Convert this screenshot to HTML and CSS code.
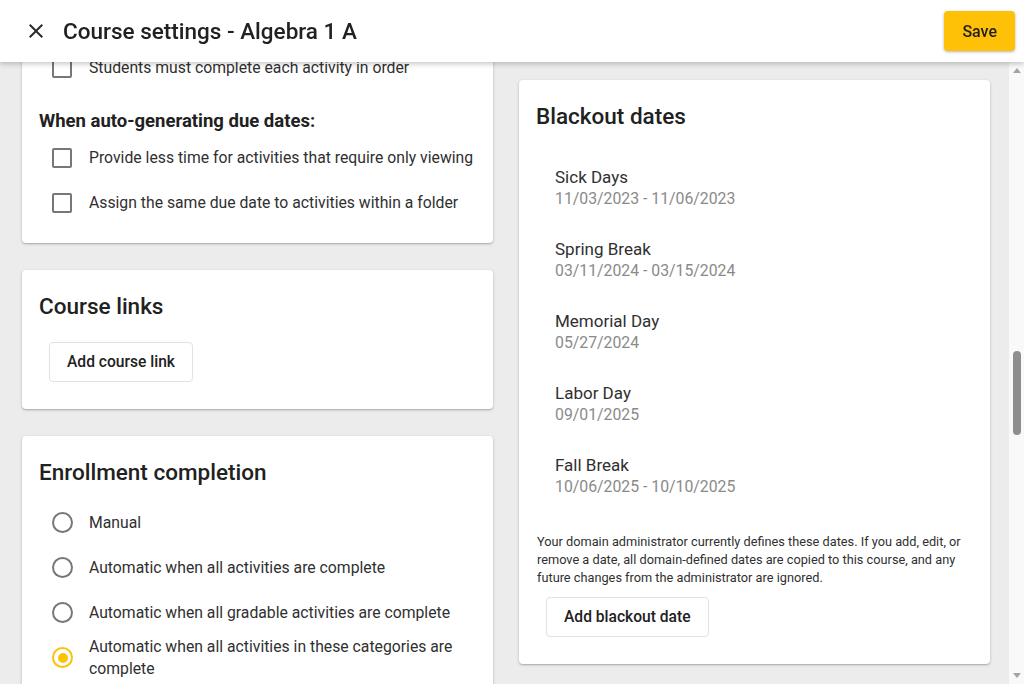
FILE: index.html
```html
<!DOCTYPE html>
<html lang="en">
<head>
<meta charset="utf-8">
<title>Course settings - Algebra 1 A</title>
<link rel="stylesheet" href="styles.css">
</head>
<body>
<div class="app">
  <header class="topbar">
    <button class="icon-btn" type="button" aria-label="Close">
      <svg viewBox="0 0 24 24" width="24" height="24" aria-hidden="true"><path fill="currentColor" d="M19 6.41L17.59 5 12 10.59 6.41 5 5 6.41 10.59 12 5 17.59 6.41 19 12 13.41 17.59 19 19 17.59 13.41 12z"/></svg>
    </button>
    <h1 class="topbar-title">Course settings - Algebra 1 A</h1>
    <button class="btn-primary" type="button">Save</button>
  </header>

  <div class="workspace">
    <main class="main">
      <div class="columns">
        <!-- left column -->
        <div class="column">
          <section class="card">
            <h2 class="card-title">Details</h2>
            <div class="card-body">
              <div class="field"><span class="field-label">Title</span><div class="field-input">Algebra 1 A</div></div>
              <div class="field"><span class="field-label">Course ID</span><div class="field-input">ALG1A-2024</div></div>
              <div class="field"><span class="field-label">Subject</span><div class="field-input">Mathematics</div></div>
              <div class="field"><span class="field-label">Grade levels</span><div class="field-input">9, 10</div></div>
              <div class="field"><span class="field-label">Term</span><div class="field-input">2024 - 2025</div></div>
              <div class="field"><span class="field-label">Language</span><div class="field-input">English</div></div>
              <div class="field"><span class="field-label">Description</span><div class="field-input textarea">Linear equations, inequalities, functions and an introduction to quadratics.</div></div>
            </div>
          </section>

          <section class="card">
            <h2 class="card-title">Student experience</h2>
            <div class="card-body">
              <label class="check-row"><span class="checkbox"></span><span class="row-text">Show course overview on the home page</span></label>
              <label class="check-row"><span class="checkbox"></span><span class="row-text">Show activity scores to students</span></label>
              <label class="check-row"><span class="checkbox"></span><span class="row-text">Show the gradebook to students</span></label>
              <label class="check-row"><span class="checkbox"></span><span class="row-text">Show class averages</span></label>
              <label class="check-row"><span class="checkbox"></span><span class="row-text">Allow students to view future activities</span></label>
              <label class="check-row"><span class="checkbox"></span><span class="row-text">Allow students to see the course roster</span></label>
              <label class="check-row"><span class="checkbox"></span><span class="row-text">Show the course calendar</span></label>
              <label class="check-row"><span class="checkbox"></span><span class="row-text">Show course announcements</span></label>
              <div class="subhead">Discussions:</div>
              <label class="check-row"><span class="checkbox"></span><span class="row-text">Allow students to start new threads</span></label>
              <label class="check-row"><span class="checkbox"></span><span class="row-text">Allow anonymous posts</span></label>
              <label class="check-row"><span class="checkbox"></span><span class="row-text">Require a post before viewing replies</span></label>
            </div>
          </section>

          <section class="card">
            <h2 class="card-title">Standards</h2>
            <div class="card-body">
              <div class="field"><span class="field-label">Standards set</span><div class="field-input">Common Core State Standards</div></div>
              <label class="check-row"><span class="checkbox"></span><span class="row-text">Show standards on activities</span></label>
              <label class="check-row"><span class="checkbox"></span><span class="row-text">Report mastery by standard</span></label>
              <label class="check-row"><span class="checkbox"></span><span class="row-text">Include ungraded standards</span></label>
              <label class="check-row"><span class="checkbox"></span><span class="row-text">Allow teachers to edit alignments</span></label>
            </div>
          </section>

          <section class="card">
            <h2 class="card-title">Course progression</h2>
            <div class="card-body">
              <label class="check-row"><span class="checkbox"></span><span class="row-text">Hide activities until their start date</span></label>
              <label class="check-row"><span class="checkbox"></span><span class="row-text">Lock activities after their due date</span></label>
              <label class="check-row"><span class="checkbox"></span><span class="row-text">Allow late submissions</span></label>
              <label class="check-row"><span class="checkbox"></span><span class="row-text">Students must complete each activity in order</span></label>
              <div class="subhead">When auto-generating due dates:</div>
              <label class="check-row"><span class="checkbox"></span><span class="row-text">Provide less time for activities that require only viewing</span></label>
              <label class="check-row"><span class="checkbox"></span><span class="row-text">Assign the same due date to activities within a folder</span></label>
            </div>
          </section>

          <section class="card">
            <h2 class="card-title">Course links</h2>
            <div class="card-body">
              <div class="actions"><button class="btn" type="button">Add course link</button></div>
            </div>
          </section>

          <section class="card">
            <h2 class="card-title">Enrollment completion</h2>
            <div class="card-body options">
              <label class="radio-row"><span class="radio"></span><span class="row-text">Manual</span></label>
              <label class="radio-row"><span class="radio"></span><span class="row-text">Automatic when all activities are complete</span></label>
              <label class="radio-row"><span class="radio"></span><span class="row-text">Automatic when all gradable activities are complete</span></label>
              <label class="radio-row"><span class="radio on"></span><span class="row-text">Automatic when all activities in these categories are complete</span></label>
              <label class="check-row nested"><span class="checkbox"></span><span class="row-text">Homework</span></label>
              <label class="check-row nested"><span class="checkbox"></span><span class="row-text">Quizzes</span></label>
              <label class="check-row nested"><span class="checkbox"></span><span class="row-text">Tests</span></label>
              <label class="check-row nested"><span class="checkbox"></span><span class="row-text">Projects</span></label>
              <label class="check-row nested"><span class="checkbox"></span><span class="row-text">Participation</span></label>
            </div>
          </section>

          <section class="card">
            <h2 class="card-title">Certificates</h2>
            <div class="card-body">
              <label class="check-row"><span class="checkbox"></span><span class="row-text">Issue a certificate on completion</span></label>
              <label class="check-row"><span class="checkbox"></span><span class="row-text">Include the final grade</span></label>
              <label class="check-row"><span class="checkbox"></span><span class="row-text">Email the certificate to the student</span></label>
              <div class="field"><span class="field-label">Certificate title</span><div class="field-input">Certificate of Completion</div></div>
              <div class="field"><span class="field-label">Signed by</span><div class="field-input">Course instructor</div></div>
            </div>
          </section>

          <section class="card">
            <h2 class="card-title">Announcements</h2>
            <div class="card-body">
              <label class="check-row"><span class="checkbox"></span><span class="row-text">Show announcements on the home page</span></label>
              <label class="check-row"><span class="checkbox"></span><span class="row-text">Email announcements to students</span></label>
              <label class="check-row"><span class="checkbox"></span><span class="row-text">Email announcements to guardians</span></label>
              <label class="check-row"><span class="checkbox"></span><span class="row-text">Allow comments on announcements</span></label>
              <label class="check-row"><span class="checkbox"></span><span class="row-text">Pin the newest announcement</span></label>
              <label class="check-row"><span class="checkbox"></span><span class="row-text">Archive announcements after 30 days</span></label>
            </div>
          </section>

          <section class="card">
            <h2 class="card-title">Integrations</h2>
            <div class="card-body">
              <div class="field"><span class="field-label">Student information system ID</span><div class="field-input">SIS-88214</div></div>
              <div class="field"><span class="field-label">External tool</span><div class="field-input">None</div></div>
              <label class="check-row"><span class="checkbox"></span><span class="row-text">Sync grades to the SIS</span></label>
              <label class="check-row"><span class="checkbox"></span><span class="row-text">Sync enrollments from the SIS</span></label>
              <label class="check-row"><span class="checkbox"></span><span class="row-text">Allow LTI launches</span></label>
              <label class="check-row"><span class="checkbox"></span><span class="row-text">Share usage data</span></label>
            </div>
          </section>

          <section class="card">
            <h2 class="card-title">Archive</h2>
            <div class="card-body">
              <label class="check-row"><span class="checkbox"></span><span class="row-text">Archive course after the end date</span></label>
              <label class="check-row"><span class="checkbox"></span><span class="row-text">Keep student submissions</span></label>
              <label class="check-row"><span class="checkbox"></span><span class="row-text">Notify teachers before archiving</span></label>
            </div>
          </section>
        </div>

        <!-- right column -->
        <div class="column">
          <section class="card">
            <h2 class="card-title">Grading</h2>
            <div class="card-body">
              <div class="field"><span class="field-label">Grade scale</span><div class="field-input">Standard (A - F)</div></div>
              <div class="field"><span class="field-label">Passing score</span><div class="field-input">70%</div></div>
              <div class="subhead">Gradebook:</div>
              <label class="check-row"><span class="checkbox"></span><span class="row-text">Show letter grades</span></label>
              <label class="check-row"><span class="checkbox"></span><span class="row-text">Drop the lowest score in each category</span></label>
              <label class="check-row"><span class="checkbox"></span><span class="row-text">Count missing work as zero</span></label>
              <label class="check-row"><span class="checkbox"></span><span class="row-text">Round final grades</span></label>
            </div>
          </section>

          <section class="card">
            <h2 class="card-title">Notifications</h2>
            <div class="card-body">
              <label class="check-row"><span class="checkbox"></span><span class="row-text">New submissions</span></label>
              <label class="check-row"><span class="checkbox"></span><span class="row-text">Late submissions</span></label>
              <label class="check-row"><span class="checkbox"></span><span class="row-text">New discussion posts</span></label>
              <label class="check-row"><span class="checkbox"></span><span class="row-text">Enrollment changes</span></label>
              <label class="check-row"><span class="checkbox"></span><span class="row-text">Messages from students</span></label>
              <div class="subhead">Students are notified of:</div>
              <label class="check-row"><span class="checkbox"></span><span class="row-text">New grades</span></label>
              <label class="check-row"><span class="checkbox"></span><span class="row-text">Upcoming due dates</span></label>
              <label class="check-row"><span class="checkbox"></span><span class="row-text">Teacher feedback</span></label>
            </div>
          </section>

          <section class="card">
            <h2 class="card-title">Schedule</h2>
            <div class="card-body">
              <div class="field"><span class="field-label">Start date</span><div class="field-input">08/19/2024</div></div>
              <div class="field"><span class="field-label">End date</span><div class="field-input">05/30/2025</div></div>
              <div class="field"><span class="field-label">Time zone</span><div class="field-input">Mountain Time</div></div>
              <label class="check-row"><span class="checkbox"></span><span class="row-text">Hide course before the start date</span></label>
              <label class="check-row"><span class="checkbox"></span><span class="row-text">Lock course after the end date</span></label>
              <label class="check-row"><span class="checkbox"></span><span class="row-text">Skip weekends when scheduling</span></label>
            </div>
          </section>

          <section class="card">
            <h2 class="card-title">Availability</h2>
            <div class="card-body">
              <div class="field"><span class="field-label">Days in session</span><div class="field-input">Monday - Friday</div></div>
              <div class="field"><span class="field-label">Enrollment limit</span><div class="field-input">35</div></div>
              <label class="check-row"><span class="checkbox"></span><span class="row-text">Open enrollment</span></label>
              <label class="check-row"><span class="checkbox"></span><span class="row-text">Require enrollment approval</span></label>
              <label class="check-row"><span class="checkbox"></span><span class="row-text">Allow self-paced enrollment</span></label>
              <label class="check-row"><span class="checkbox"></span><span class="row-text">Show in the course catalog</span></label>
              <label class="check-row"><span class="checkbox"></span><span class="row-text">Allow guest access</span></label>
              <label class="check-row"><span class="checkbox"></span><span class="row-text">Allow course copies</span></label>
            </div>
          </section>

          <section class="card" id="blackout-dates">
            <h2 class="card-title">Blackout dates</h2>
            <div class="card-body">
              <ul class="date-list">
                <li class="date-item"><span class="date-name">Sick Days</span><span class="date-range">11/03/2023 - 11/06/2023</span></li>
                <li class="date-item"><span class="date-name">Spring Break</span><span class="date-range">03/11/2024 - 03/15/2024</span></li>
                <li class="date-item"><span class="date-name">Memorial Day</span><span class="date-range">05/27/2024</span></li>
                <li class="date-item"><span class="date-name">Labor Day</span><span class="date-range">09/01/2025</span></li>
                <li class="date-item"><span class="date-name">Fall Break</span><span class="date-range">10/06/2025 - 10/10/2025</span></li>
              </ul>
              <p class="note">Your domain administrator currently defines these dates. If you add, edit, or remove a date, all domain-defined dates are copied to this course, and any future changes from the administrator are ignored.</p>
              <div class="actions"><button class="btn" type="button">Add blackout date</button></div>
            </div>
          </section>
        </div>
      </div>
    </main>

    <div class="scrollbar" aria-hidden="true">
      <span class="scroll-arrow up"></span>
      <div class="scroll-track"><span class="scroll-thumb"></span></div>
      <span class="scroll-arrow down"></span>
    </div>
  </div>
</div>
<script src="script.js"></script>
</body>
</html>
```

FILE: styles.css
```css
* {
  box-sizing: border-box;
}

html,
body {
  margin: 0;
  height: 100%;
}

body {
  font-family: Roboto, "Noto Sans", "Liberation Sans", sans-serif;
  font-size: 15.75px;
  line-height: 22px;
  color: #303030;
  background: #ececec;
}

button {
  font-family: inherit;
}

.app {
  display: flex;
  flex-direction: column;
  height: 100vh;
}

/* top bar */
.topbar {
  flex: none;
  position: relative;
  z-index: 2;
  display: flex;
  align-items: center;
  height: 62px;
  padding: 0 9px 0 24px;
  background: #fff;
  box-shadow: 0 2px 5px rgba(0, 0, 0, 0.22);
}

.icon-btn {
  display: flex;
  width: 24px;
  height: 24px;
  padding: 0;
  border: 0;
  background: none;
  color: #2b2b2b;
  cursor: pointer;
}

.topbar-title {
  flex: 1;
  margin: 0 0 0 15px;
  font-size: 22.5px;
  line-height: 30px;
  font-weight: 500;
  color: #212121;
}

.btn-primary {
  height: 40px;
  padding: 0 18px;
  border: 0;
  border-radius: 4px;
  background: #ffc107;
  color: #1f1f1f;
  font-size: 16px;
  font-weight: 500;
  box-shadow: 0 1px 3px rgba(0, 0, 0, 0.3);
}

/* scrolling content with its own scrollbar rail */
.workspace {
  flex: 1;
  min-height: 0;
  display: flex;
}

.main {
  flex: 1;
  min-width: 0;
  overflow-y: scroll;
  scrollbar-width: none;
  background: #ececec;
}

.main::-webkit-scrollbar {
  display: none;
}

.scrollbar {
  flex: none;
  width: 15px;
  display: flex;
  flex-direction: column;
  background: #f9f9f9;
}

.scroll-arrow {
  flex: none;
  height: 15px;
  display: flex;
  justify-content: center;
  align-items: center;
}

.scroll-arrow::before {
  content: "";
  width: 0;
  height: 0;
  border-left: 4px solid transparent;
  border-right: 4px solid transparent;
}

.scroll-arrow.up {
  padding-top: 2px;
}

.scroll-arrow.up::before {
  border-bottom: 5px solid #a3a3a3;
}

.scroll-arrow.down {
  padding-bottom: 2px;
}

.scroll-arrow.down::before {
  border-top: 5px solid #a3a3a3;
}

.scroll-track {
  flex: 1;
  padding: 0 3px 0 4px;
}

.scroll-thumb {
  display: block;
  width: 8px;
  height: 84px;
  border-radius: 4px;
  background: #8e8e8e;
}

.columns {
  display: grid;
  grid-template-columns: 1fr 1fr;
  align-items: start;
  column-gap: 26px;
  padding: 18px 19px 20px 22px;
}

.column {
  display: flex;
  flex-direction: column;
  gap: 27px;
}

.card {
  padding: 20px 18px 18px;
  background: #fff;
  border-radius: 4px;
  box-shadow: 0 1px 3px rgba(0, 0, 0, 0.22), 0 1px 1px rgba(0, 0, 0, 0.1);
}

.card-title {
  margin: 0 0 0 -1px;
  font-size: 22.5px;
  line-height: 32px;
  font-weight: 500;
  color: #212121;
}

.card-body {
  margin-top: 11px;
}

.card-body.options {
  padding-top: 1px;
}

.subhead {
  margin: 20px 0 3px -1px;
  font-size: 18.5px;
  font-weight: 700;
  color: #212121;
}

/* checkbox and radio rows */
.check-row,
.radio-row {
  display: flex;
  align-items: center;
  gap: 17px;
  min-height: 45px;
  padding-left: 12px;
  color: #303030;
}

.radio-row {
  gap: 16px;
}

.check-row .row-text {
  white-space: nowrap;
}

.check-row.nested {
  padding-left: 49px;
}

.checkbox {
  flex: none;
  width: 20px;
  height: 20px;
  border: 2px solid #777;
  border-radius: 2px;
  background: #fff;
}

.radio {
  flex: none;
  display: grid;
  place-items: center;
  width: 21px;
  height: 21px;
  border: 2px solid #777;
  border-radius: 50%;
  background: #fff;
}

.radio.on {
  border-color: #ffc107;
}

.radio.on::after {
  content: "";
  width: 10px;
  height: 10px;
  border-radius: 50%;
  background: #ffc107;
}

/* text fields */
.field {
  padding: 8px 0;
}

.field-label {
  display: block;
  font-size: 14px;
  line-height: 20px;
  color: #555;
}

.field-input {
  height: 40px;
  margin-top: 4px;
  padding: 0 12px;
  border: 1px solid #c4c4c4;
  border-radius: 4px;
  line-height: 38px;
  color: #303030;
}

.field-input.textarea {
  height: 150px;
  padding-top: 8px;
  line-height: 22px;
}

/* buttons */
.actions {
  display: flex;
}

.btn {
  height: 40px;
  margin: 9px;
  padding: 0 17px;
  border: 1px solid #e2e2e2;
  border-radius: 4px;
  background: #fff;
  color: #212121;
  font-size: 15.6px;
  font-weight: 500;
}

/* blackout dates */
.date-list {
  margin: 0;
  padding: 9px 0 0;
  list-style: none;
}

.date-item {
  display: flex;
  flex-direction: column;
  padding: 14px 18px;
}

.date-name {
  font-size: 17px;
  color: #303030;
}

.date-range {
  font-size: 15.8px;
  color: #8a8a8a;
}

.note {
  margin: 21px 0 1px;
  font-size: 12.75px;
  line-height: 18px;
  color: #303030;
}
```

FILE: script.js
```js
// Open the settings panel scrolled to the blackout dates section and keep
// the scrollbar rail in sync with the content.
const main = document.querySelector('.main');
const blackout = document.getElementById('blackout-dates');
const track = document.querySelector('.scroll-track');
const thumb = document.querySelector('.scroll-thumb');

function syncThumb() {
  const trackHeight = track.clientHeight;
  const visible = main.clientHeight / main.scrollHeight;
  const thumbHeight = Math.max(Math.round(trackHeight * visible), 24);
  const range = main.scrollHeight - main.clientHeight;
  const offset = range > 0 ? (main.scrollTop / range) * (trackHeight - thumbHeight) : 0;
  thumb.style.height = thumbHeight + 'px';
  thumb.style.marginTop = Math.round(offset) + 'px';
}

main.scrollTop =
  blackout.getBoundingClientRect().top - main.getBoundingClientRect().top - 18;
syncThumb();
main.addEventListener('scroll', syncThumb);
```
